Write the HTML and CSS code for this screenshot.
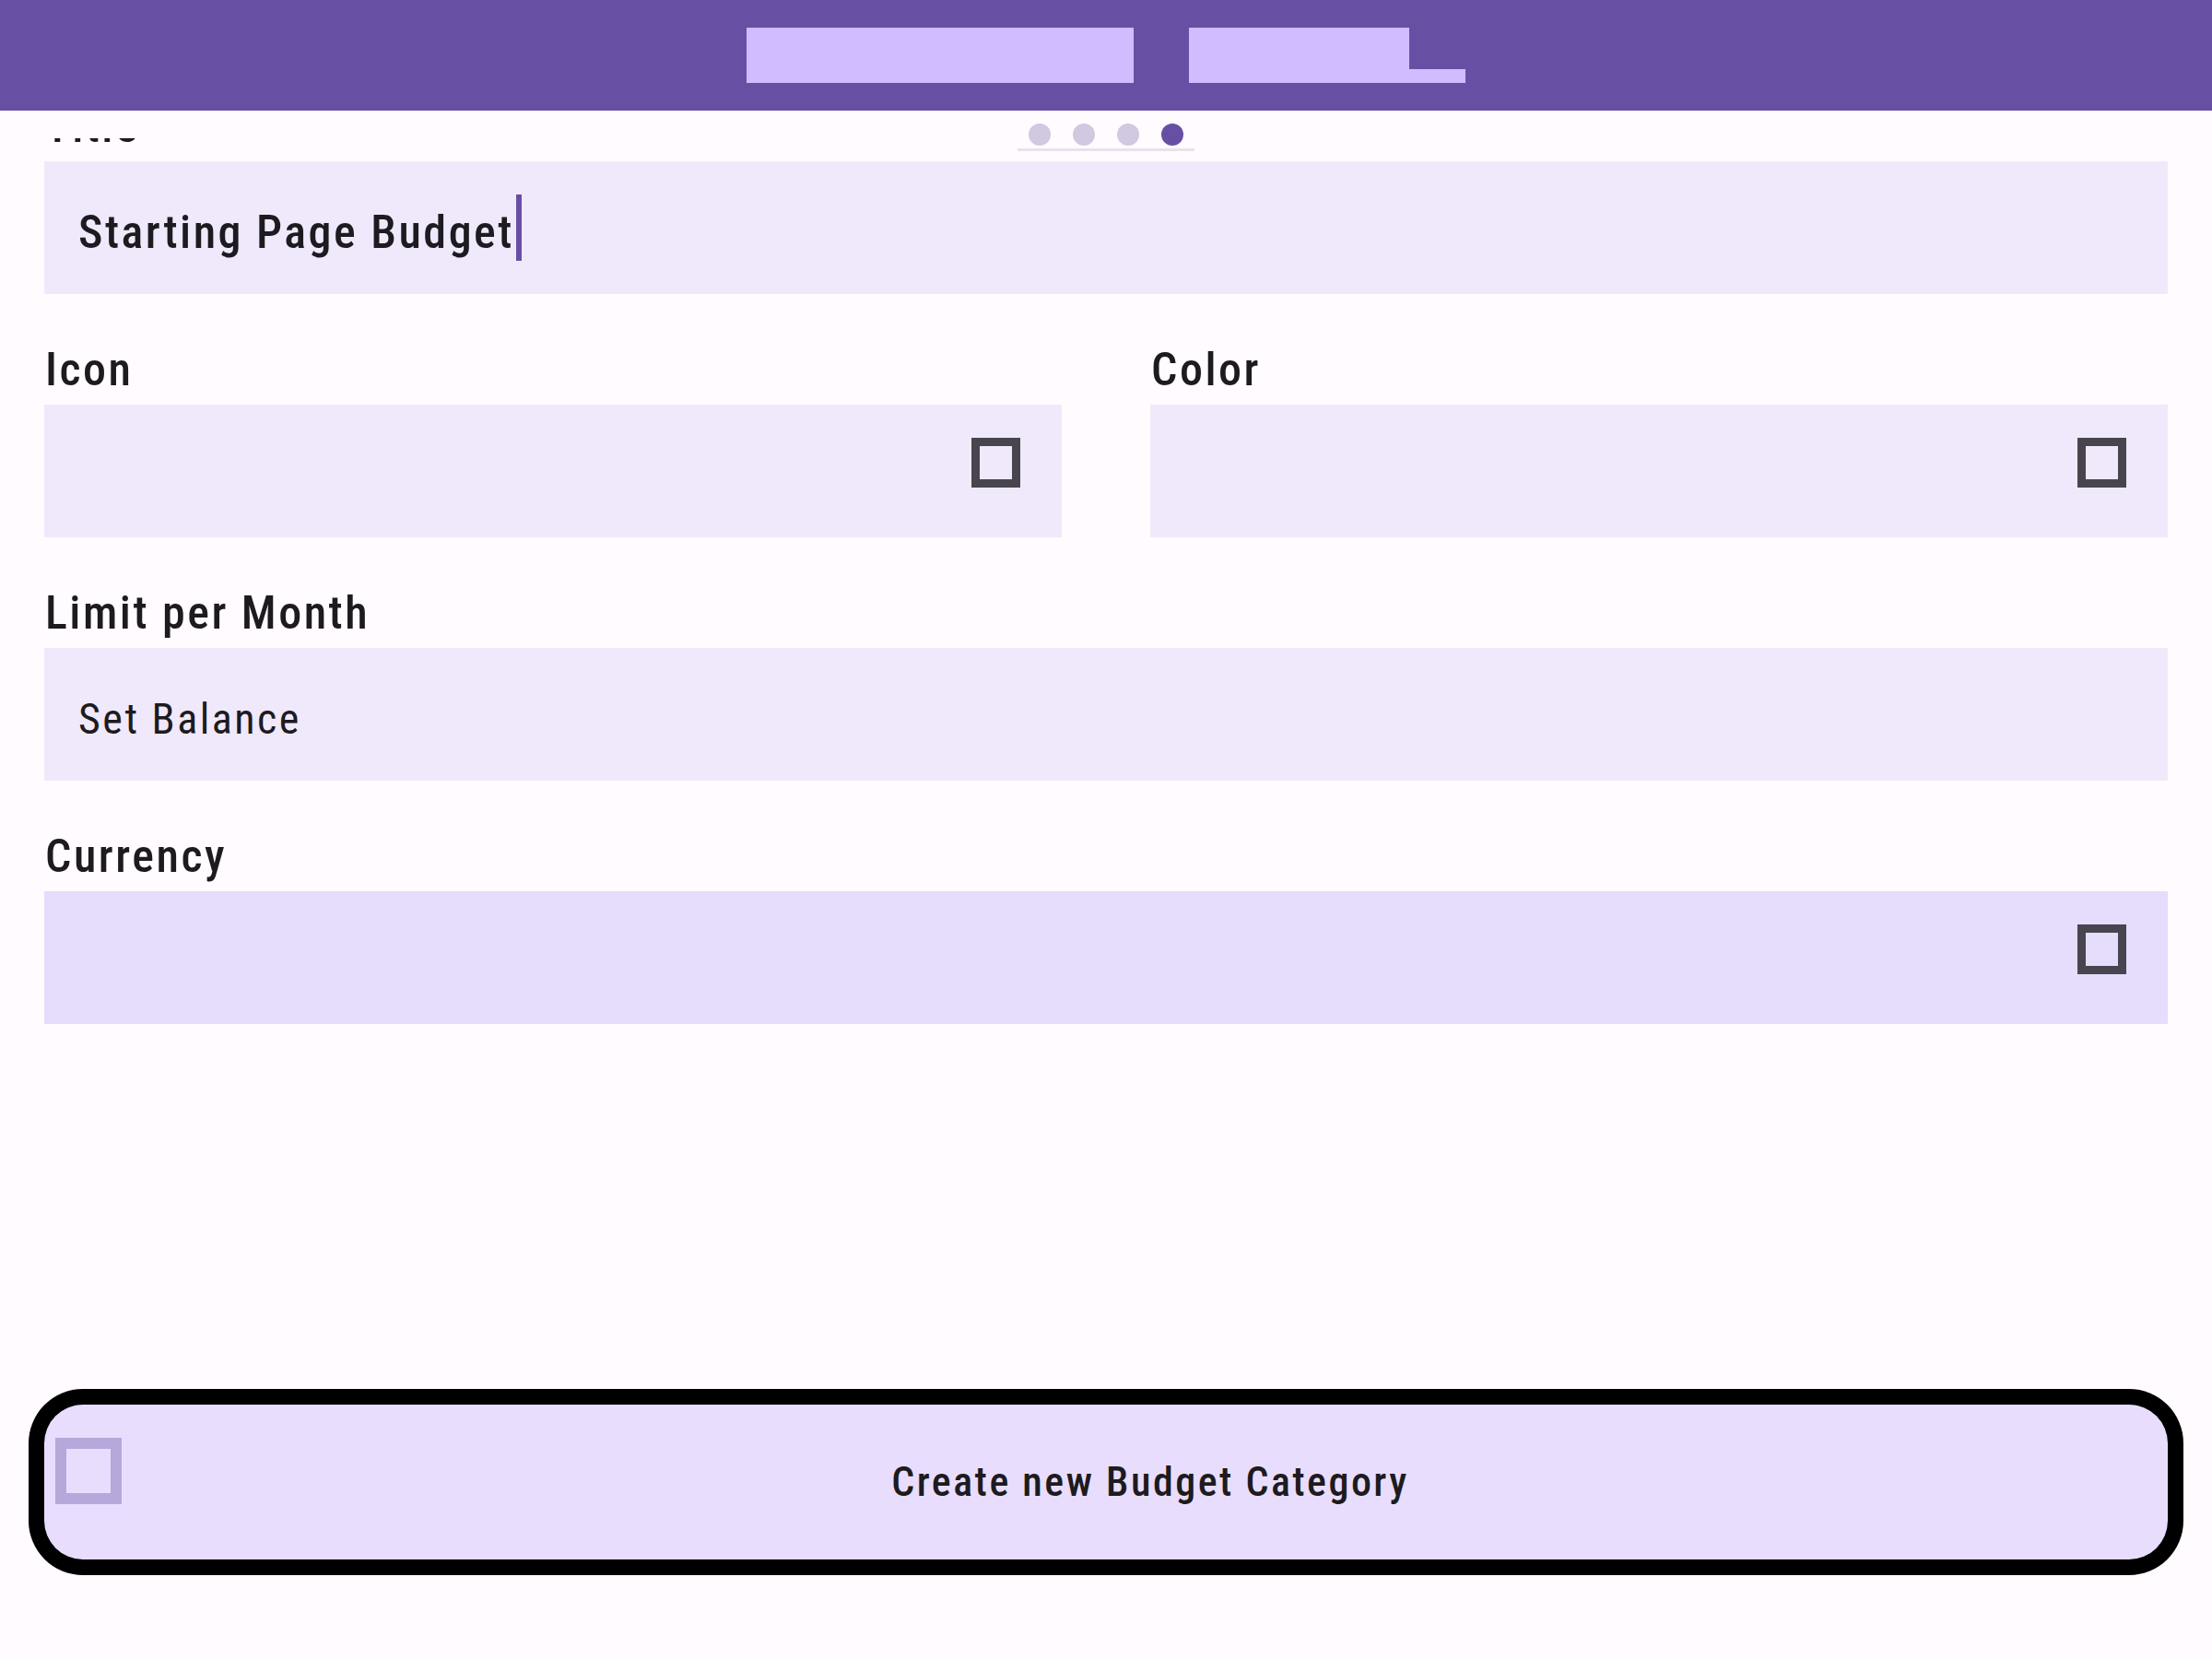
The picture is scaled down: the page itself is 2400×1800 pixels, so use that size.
FILE: index.html
```html
<!DOCTYPE html>
<html lang="en">
<head>
<meta charset="utf-8">
<title>Create Budget Category</title>
<link rel="stylesheet" href="styles.css">
</head>
<body>
<div class="app">
  <header class="topbar">
    <div class="tab-block tab-wide"></div>
    <div class="tab-group">
      <div class="tab-block tab-narrow"></div>
      <div class="tab-tail"></div>
    </div>
  </header>
  <main class="main">
    <div class="pager" aria-hidden="true">
      <div class="dots">
        <span class="dot"></span>
        <span class="dot"></span>
        <span class="dot"></span>
        <span class="dot dot-active"></span>
      </div>
      <div class="pager-line"></div>
    </div>
    <div class="viewport">
      <form class="form">
        <div class="group">
          <label class="label">Title</label>
          <div class="field field-text">
            <span class="value">Starting Page Budget</span><span class="caret"></span>
          </div>
        </div>
        <div class="pair">
          <div class="group">
            <label class="label">Icon</label>
            <div class="field field-select"><span class="tofu"></span></div>
          </div>
          <div class="group">
            <label class="label">Color</label>
            <div class="field field-select"><span class="tofu"></span></div>
          </div>
        </div>
        <div class="group">
          <label class="label">Limit per Month</label>
          <div class="field field-text">
            <span class="hint">Set Balance</span>
          </div>
        </div>
        <div class="group">
          <label class="label">Currency</label>
          <div class="field field-select field-active"><span class="tofu"></span></div>
        </div>
      </form>
    </div>
    <div class="footer">
      <button type="button" class="create-btn">
        <span class="btn-tofu"></span>
        <span class="btn-label">Create new Budget Category</span>
      </button>
    </div>
  </main>
</div>
</body>
</html>
```
FILE: styles.css
```css
* { box-sizing: border-box; }
html, body { margin: 0; padding: 0; }
body {
  background: #fffbfe;
  font-family: Roboto, "Noto Sans", "Liberation Sans", sans-serif;
  font-stretch: 80%;
  color: #1d1b20;
}
.app {
  height: 1800px;
  display: flex;
  flex-direction: column;
}
.topbar {
  height: 120px;
  flex: none;
  background: #6750a4;
  display: flex;
  align-items: center;
  justify-content: center;
  gap: 60px;
}
.tab-block { background: #d0bcff; height: 60px; }
.tab-wide { width: 420px; }
.tab-group { display: flex; align-items: flex-end; }
.tab-narrow { width: 239px; }
.tab-tail { width: 61px; height: 15px; background: #d0bcff; }

.main {
  flex: 1;
  position: relative;
  display: flex;
  flex-direction: column;
  min-height: 0;
}
.pager {
  position: absolute;
  top: 14px;
  left: 50%;
  transform: translateX(-50%);
  width: 192px;
  z-index: 2;
}
.dots { display: flex; justify-content: center; gap: 24px; }
.dot { width: 24px; height: 24px; border-radius: 50%; background: #d1c8e1; }
.dot-active { background: #6750a4; }
.pager-line { height: 3px; margin-top: 3px; background: #e8e1ee; }

.viewport {
  flex: 1;
  margin-top: 30px;
  overflow: hidden;
  min-height: 0;
}
.form {
  margin: -41px 0 0;
  padding: 0 48px;
  display: flex;
  flex-direction: column;
  gap: 54px;
}
.group { display: flex; flex-direction: column; }
.label {
  display: block;
  font-size: 50px;
  line-height: 56px;
  font-weight: 500;
  letter-spacing: 2.5px;
  margin-bottom: 10px;
  padding-left: 1px;
  color: #1d1b20;
}
.pair {
  display: grid;
  grid-template-columns: 1fr 1fr;
  gap: 96px;
}
.field {
  height: 144px;
  background: #f0e9fc;
  display: flex;
  align-items: center;
}
.field-text { padding-left: 37px; }
.field-active { background: #e6ddfc; }
.value {
  font-size: 50px;
  font-weight: 500;
  letter-spacing: 2.5px;
  padding-top: 10px;
  color: #1d1b20;
}
.hint {
  font-size: 46px;
  font-weight: 400;
  letter-spacing: 2.5px;
  padding-top: 10px;
  color: #1d1b20;
}
.caret {
  width: 6px;
  height: 72px;
  margin-left: 2px;
  background: #6750a4;
}
.field-select {
  justify-content: flex-end;
  align-items: flex-start;
  padding: 36px 45px 0 0;
}
.tofu {
  width: 53px;
  height: 54px;
  border: 9px solid #49454f;
}

.footer {
  flex: none;
  padding: 0 48px 108px;
}
.create-btn {
  width: 100%;
  height: 168px;
  border: 0;
  border-radius: 42px;
  background: #e9ddfe;
  box-shadow: 0 0 0 17px #000;
  display: flex;
  align-items: flex-start;
  padding: 36px 0 0 12px;
  font-family: inherit;
  font-stretch: inherit;
  cursor: pointer;
}
.btn-tofu {
  width: 72px;
  height: 72px;
  flex: none;
  border: 12px solid #b8a7da;
}
.btn-label {
  flex: 1;
  margin-left: 12px;
  align-self: center;
  margin-top: -36px;
  text-align: center;
  font-size: 44px;
  font-weight: 500;
  letter-spacing: 2.5px;
  color: #1d1b20;
}
```
